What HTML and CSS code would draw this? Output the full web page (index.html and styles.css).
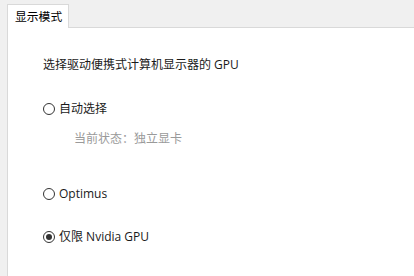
FILE: index.html
```html
<!DOCTYPE html>
<html lang="zh-CN">
<head>
<meta charset="utf-8">
<title>显示模式</title>
<link rel="stylesheet" href="styles.css">
</head>
<body>
<div class="tabs">
  <div class="tab">显示模式</div>
  <div class="tab-fill"></div>
</div>
<div class="panel">
  <p class="desc">选择驱动便携式计算机显示器的 GPU</p>
  <label class="radio r1"><span class="dot"></span><span>自动选择</span></label>
  <p class="status">当前状态：独立显卡</p>
  <label class="radio r2"><span class="dot"></span><span>Optimus</span></label>
  <label class="radio r3"><span class="dot checked"></span><span>仅限 Nvidia GPU</span></label>
</div>
</body>
</html>
```
FILE: styles.css
```css
html, body {
  margin: 0;
  padding: 0;
  height: 100%;
}
body {
  background: #f0f0f0;
  font-family: "Open Sans", "Noto Sans CJK SC", sans-serif;
  font-size: 12px;
  color: #1a1a1a;
  display: flex;
  flex-direction: column;
}
.tabs {
  display: flex;
  padding: 4px 0 0 7px;
}
.tab {
  width: 62px;
  height: 24px;
  box-sizing: border-box;
  border: 1px solid #d9d9d9;
  border-bottom: none;
  background: #fff;
  padding-left: 7px;
  line-height: 23px;
  font-size: 11.8px;
  color: #000;
}
.tab-fill {
  flex: 1;
  border-bottom: 1px solid #d9d9d9;
}
.panel {
  flex: 1;
  margin-left: 7px;
  background: #fff;
  border-left: 1px solid #d9d9d9;
  padding: 29px 0 0 35px;
}
.desc {
  margin: 0;
  line-height: 16px;
}
.radio {
  display: flex;
  align-items: center;
  height: 16px;
  line-height: 16px;
}
.r1 { margin-top: 28px; }
.r2 { margin-top: 39px; }
.r3 { margin-top: 27px; }
.dot {
  width: 12px;
  height: 12px;
  box-sizing: border-box;
  border: 1px solid #333;
  border-radius: 50%;
  margin-right: 4px;
  display: flex;
  align-items: center;
  justify-content: center;
}
.dot.checked::after {
  content: "";
  width: 6px;
  height: 6px;
  border-radius: 50%;
  background: #333;
}
.status {
  margin: 14px 0 0 31px;
  line-height: 16px;
  color: #9a9a9a;
}
```
